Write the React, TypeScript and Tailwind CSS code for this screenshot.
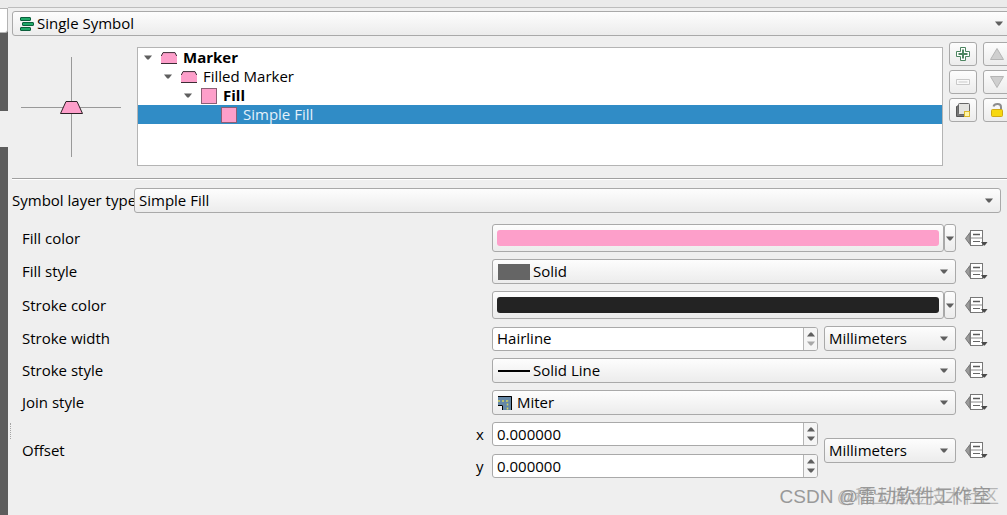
import { useState } from "react";
import type { ReactNode } from "react";

const field = "rounded-[3px] border border-[#a9a9a9]";
const raised = "bg-linear-to-b from-[#fdfdfd] to-[#ececec]";

function Caret({ up = false, dim = false }: { up?: boolean; dim?: boolean }) {
  return (
    <svg
      width="8"
      height="5"
      viewBox="0 0 8 5"
      aria-hidden="true"
      className={`${up ? "rotate-180" : ""} ${dim ? "text-[#a8a8a8]" : "text-[#5f5f5f]"}`}
    >
      <path d="M0 0.5h8L4.8 4.5H3.2z" fill="currentColor" />
    </svg>
  );
}

function MarkerIcon() {
  return (
    <svg width="16" height="12" viewBox="0 0 16 12" aria-hidden="true">
      <path d="M0 12V4.5L2 0.5H14L16 4.5V12z" fill="#fd9fca" />
      <path d="M0.3 4L2 0.6H14L15.7 4M0 11.5H16" fill="none" stroke="#3c2c35" />
    </svg>
  );
}

function FillIcon() {
  return (
    <svg width="16" height="16" viewBox="0 0 16 16" aria-hidden="true">
      <rect x="0.5" y="0.5" width="15" height="15" fill="#fd9fca" stroke="#8b5f75" />
    </svg>
  );
}

function SingleSymbolIcon() {
  return (
    <svg width="14" height="14" viewBox="0 0 14 14" aria-hidden="true">
      <g fill="#1fa868" stroke="#0b5f3c">
        <rect x="0.5" y="0.5" width="10" height="3" rx="0.5" />
        <rect x="2.5" y="5.5" width="11" height="3" rx="0.5" />
        <rect x="0.5" y="10.5" width="10" height="3" rx="0.5" />
      </g>
    </svg>
  );
}

function MiterIcon() {
  return (
    <svg width="14" height="14" viewBox="0 0 14 14" aria-hidden="true">
      <path d="M0 0H14V14H5V9H0z" fill="#6487a6" />
      <path d="M0 0.5H13.5V14M0 9.5H4.5V14" fill="none" stroke="#000" />
      <path d="M0 5H9.5V14" fill="none" stroke="#d6d35c" strokeWidth="1.5" strokeDasharray="2 2" />
    </svg>
  );
}

type SelectProps = {
  id: string;
  label?: string;
  value: string;
  icon?: ReactNode;
  pad?: string;
  className?: string;
};

function Select({ id, label, value, icon, pad = "pl-1", className = "flex-1" }: SelectProps) {
  return (
    <div className={`relative h-[25px] min-w-0 ${field} ${raised} ${className}`}>
      <select id={id} aria-label={label} className={`block h-full w-full appearance-none pr-6 ${pad}`}>
        <option>{value}</option>
      </select>
      {icon && (
        <span className="pointer-events-none absolute inset-y-0 left-[5px] flex items-center">{icon}</span>
      )}
      <span className="pointer-events-none absolute inset-y-0 right-[7px] flex items-center">
        <Caret />
      </span>
    </div>
  );
}

function ColorButton({ id, color }: { id: string; color: string }) {
  return (
    <div className="flex h-7 flex-1">
      <button type="button" id={id} className={`flex-1 p-1 ${field} ${raised}`}>
        <span className={`block h-4 rounded-[3px] ${color}`} />
      </button>
      <button
        type="button"
        aria-label="Color options"
        className={`flex w-3 items-center justify-center ${field} ${raised}`}
      >
        <Caret />
      </button>
    </div>
  );
}

function SpinBox({ id, initial, atMin = false }: { id: string; initial: string; atMin?: boolean }) {
  const [value, setValue] = useState(initial);
  const step = (d: number) => setValue(((parseFloat(value) || 0) + d).toFixed(6));
  return (
    <div className={`flex h-6 min-w-0 flex-1 overflow-hidden bg-white ${field}`}>
      <input
        id={id}
        value={value}
        onChange={(e) => setValue(e.target.value)}
        className="min-w-0 flex-1 pl-1 outline-none"
      />
      <div className="flex w-[14px] flex-col border-l border-[#b5b5b5] bg-[#f5f5f5] py-0.5">
        <button
          type="button"
          aria-label="Increase"
          onClick={() => step(1)}
          className="flex flex-1 items-center justify-center"
        >
          <Caret up />
        </button>
        <button
          type="button"
          aria-label="Decrease"
          disabled={atMin}
          onClick={() => step(-1)}
          className="flex flex-1 items-center justify-center"
        >
          <Caret dim={atMin} />
        </button>
      </div>
    </div>
  );
}

function OverrideButton() {
  return (
    <button type="button" aria-label="Data defined override" className="w-[23px] shrink-0">
      <svg width="23" height="17" viewBox="0 0 23 17" aria-hidden="true">
        <path d="M5 2.5V14.5L0.5 8.5z" fill="#9a9a9a" stroke="#777" />
        <rect x="5.5" y="0.5" width="12" height="15" fill="#fff" stroke="#777" />
        <path d="M5.5 8H17.5" stroke="#8a8a8a" />
        <path d="M8 4.5H15" stroke="#5a5a5a" strokeWidth="1.5" />
        <path d="M8 11.5H15" stroke="#666" />
        <path d="M16 12H22.5L19.8 15.5H18.7z" fill="#4a4a4a" />
      </svg>
    </button>
  );
}

function Row({ label, htmlFor, children }: { label: string; htmlFor: string; children: ReactNode }) {
  return (
    <div className="flex items-center">
      <label htmlFor={htmlFor} className="w-[calc(50%-13px)] shrink-0">
        {label}
      </label>
      <div className="flex min-w-0 flex-1 items-center gap-[9px]">
        {children}
        <OverrideButton />
      </div>
    </div>
  );
}

const layers = [
  { name: "Marker", indent: "pl-1.5", bold: true, icon: <MarkerIcon /> },
  { name: "Filled Marker", indent: "pl-[26px]", bold: false, icon: <MarkerIcon /> },
  { name: "Fill", indent: "pl-[46px]", bold: true, icon: <FillIcon /> },
  { name: "Simple Fill", indent: "pl-[66px]", bold: false, icon: <FillIcon />, selected: true },
];

function LayerTree() {
  return (
    <ul role="tree" aria-label="Symbol layers" className="h-[119px] min-w-0 flex-1 border border-[#b4b4b4] bg-white">
      {layers.map((l) => (
        <li
          key={l.name}
          role="treeitem"
          aria-selected={!!l.selected}
          className={`flex h-[19px] items-center ${l.indent} ${l.bold ? "font-bold" : ""} ${
            l.selected ? "bg-[#308cc6] text-[#e4f1fa]" : ""
          }`}
        >
          <span className="w-[17px]">{!l.selected && <Caret />}</span>
          {l.icon}
          <span className="ml-1.5">{l.name}</span>
        </li>
      ))}
    </ul>
  );
}

const tools = [
  {
    name: "Add symbol layer",
    icon: (
      <>
        <path d="M5.5 1.5h5v4h4v5h-4v4h-5v-4h-4v-5h4z" fill="#fff" stroke="#4c8560" />
        <path d="M8 3.5v9M3.5 8h9" fill="none" stroke="#4c8560" strokeWidth="2" />
      </>
    ),
  },
  {
    name: "Move up",
    icon: <path d="M8 2.5L14.5 13.5H1.5z" fill="#cfcfcf" stroke="#b5b5b5" />,
  },
  {
    name: "Remove symbol layer",
    icon: <path d="M1.5 5.5h13v5h-13zM3.5 8h9" fill="#fafafa" stroke="#c9c9c9" />,
  },
  {
    name: "Move down",
    icon: <path d="M8 13.5L14.5 2.5H1.5z" fill="#cfcfcf" stroke="#b5b5b5" />,
  },
  {
    name: "Duplicate symbol layer",
    icon: (
      <>
        <path d="M3.5 3.5L1.5 4.5v10h10l2-2z" fill="#777" stroke="#555" />
        <rect x="3.5" y="1.5" width="11" height="11" rx="1" fill="#e4e4e1" stroke="#666" />
        <rect x="9.5" y="9.5" width="5" height="5" fill="#fff6a8" stroke="#dcb92c" />
      </>
    ),
  },
  {
    name: "Lock color",
    icon: (
      <>
        <path d="M4.5 4.5C5.5 1 12 1 12 5V8" fill="none" stroke="#8c8c8c" strokeWidth="2" />
        <rect x="2.5" y="7.5" width="11" height="7" rx="1" fill="#f7d80f" stroke="#d0a915" />
      </>
    ),
  },
];

function Preview() {
  return (
    <svg width="100" height="100" viewBox="0 0 100 100" role="img" aria-label="Symbol preview">
      <path d="M50.5 0V100M0 50.5H100" stroke="#999" />
      <path d="M45 44.5H56L61.5 56.5H39.5z" fill="#fd9fca" stroke="#2c2025" />
    </svg>
  );
}

export default function App() {
  return (
    <div className="relative flex min-h-screen overflow-hidden bg-[#efefef] font-['Open_Sans','Noto_Sans',sans-serif] text-[15px] leading-[19px] text-black">
      <aside className="flex w-2 shrink-0 flex-col bg-[#5d5d5d]">
        <div className="h-2 bg-[#ebebeb]" />
        <div className="h-[25px] rounded-br-[3px] border-t border-r border-b border-[#b4b4b4] bg-white" />
        <div className="mt-[78px] h-9 bg-[#efefef]" />
      </aside>

      <div className="flex w-1 shrink-0 flex-col items-center justify-end pb-[76px]">
        <div className="h-4 border-l border-dotted border-[#a5a5a5]" />
      </div>

      <main className="flex min-w-0 flex-1 flex-col">
        <div className="-mx-1 h-2 shrink-0 border-b border-[#bdbdbd] bg-[#ebebeb]" />

        <section className="-mr-1 pt-[3px]">
          <div className="flex">
            <Select
              id="renderer"
              label="Renderer"
              value="Single Symbol"
              pad="pl-6"
              icon={<span className="pl-0.5"><SingleSymbolIcon /></span>}
            />
          </div>
          <div className="mt-1.5 flex items-start">
            <div className="flex w-[125px] shrink-0 justify-center pt-[15px] pr-[7px]">
              <Preview />
            </div>
            <div className="flex min-w-0 flex-1 pt-[5px]">
              <LayerTree />
            </div>
            <div className="ml-1.5 grid shrink-0 grid-cols-2 gap-x-1.5 gap-y-1">
              {tools.map((t) => (
                <button
                  key={t.name}
                  aria-label={t.name}
                  className={`flex h-6 w-7 items-center justify-center ${field} ${raised}`}
                >
                  <svg width="16" height="16" viewBox="0 0 16 16" aria-hidden="true">
                    {t.icon}
                  </svg>
                </button>
              ))}
            </div>
          </div>
        </section>

        <hr className="mt-3 h-0.5 shrink-0 border-t border-b border-t-[#a0a0a0] border-b-white" />

        <div className="mt-2 flex items-center pr-1.5">
          <label htmlFor="layer-type" className="w-[122px] shrink-0 whitespace-nowrap">
            Symbol layer type
          </label>
          <Select id="layer-type" value="Simple Fill" />
        </div>

        <form className="mt-[11px] flex flex-col gap-[7px] pr-[19px] pl-2.5">
          <Row label="Fill color" htmlFor="fill-color">
            <ColorButton id="fill-color" color="bg-[#fd9fca]" />
          </Row>
          <Row label="Fill style" htmlFor="fill-style">
            <Select
              id="fill-style"
              value="Solid"
              pad="pl-10"
              icon={<span className="h-4 w-8 bg-[#656565]" />}
            />
          </Row>
          <Row label="Stroke color" htmlFor="stroke-color">
            <ColorButton id="stroke-color" color="bg-[#232323]" />
          </Row>
          <Row label="Stroke width" htmlFor="stroke-width">
            <div className="flex min-w-0 flex-1 items-center gap-1.5">
              <SpinBox id="stroke-width" initial="Hairline" atMin />
              <Select id="width-unit" label="Stroke width unit" value="Millimeters" className="w-[132px]" />
            </div>
          </Row>
          <Row label="Stroke style" htmlFor="stroke-style">
            <Select
              id="stroke-style"
              value="Solid Line"
              pad="pl-10"
              icon={<span className="h-0.5 w-8 bg-black" />}
            />
          </Row>
          <Row label="Join style" htmlFor="join-style">
            <Select id="join-style" value="Miter" pad="pl-6" icon={<MiterIcon />} />
          </Row>
          <Row label="Offset" htmlFor="offset-x">
            <div className="-ml-4 flex min-w-0 flex-1 items-center gap-1.5">
              <div className="flex min-w-0 flex-1 flex-col gap-2">
                <div className="flex items-center">
                  <label htmlFor="offset-x" className="w-4">
                    x
                  </label>
                  <SpinBox id="offset-x" initial="0.000000" />
                </div>
                <div className="flex items-center">
                  <label htmlFor="offset-y" className="w-4">
                    y
                  </label>
                  <SpinBox id="offset-y" initial="0.000000" />
                </div>
              </div>
              <Select id="offset-unit" label="Offset unit" value="Millimeters" className="w-[132px]" />
            </div>
          </Row>
        </form>
      </main>

      <div className="pointer-events-none absolute right-2 bottom-1 grid justify-items-end font-['Liberation_Sans','Noto_Sans_CJK_SC',sans-serif] whitespace-nowrap">
        <span className="col-start-1 row-start-1 pr-2 text-[19px] leading-7 text-[#999]">CSDN @雷动软件工作室</span>
        <span className="col-start-1 row-start-1 text-[18px] leading-7 text-[#8f8f8f]/60">@稀土掘金技术社区</span>
      </div>
    </div>
  );
}
